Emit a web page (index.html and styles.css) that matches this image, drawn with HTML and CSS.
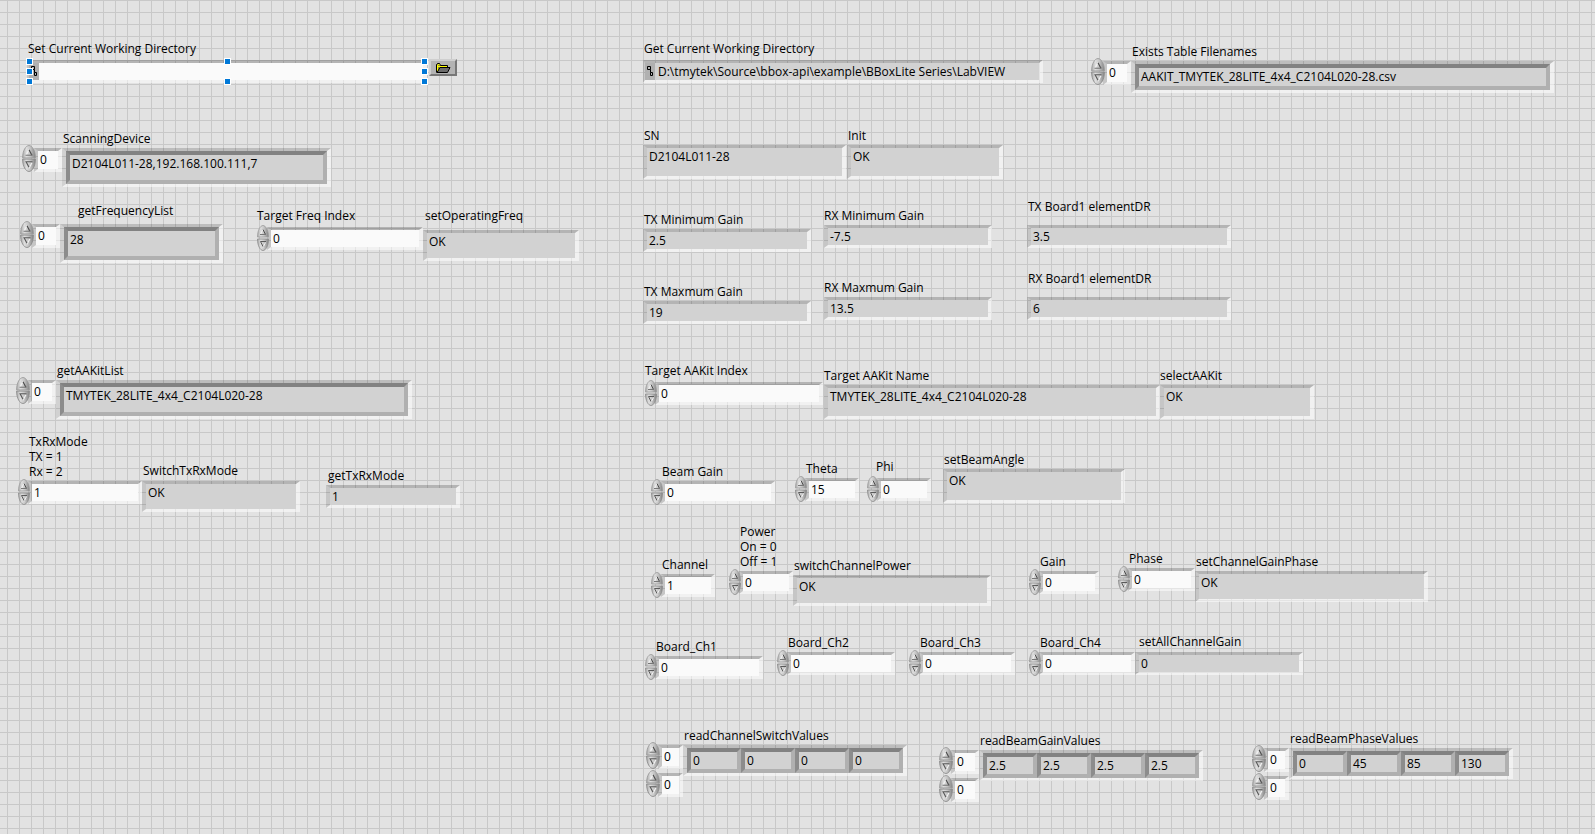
FILE: index.html
```html
<!DOCTYPE html>
<html lang="en">
<head>
<meta charset="utf-8">
<meta name="viewport" content="width=device-width, initial-scale=1">
<title>BBoxLite front panel</title>
<link rel="stylesheet" href="styles.css">
</head>
<body>
<svg class="defs" aria-hidden="true">
  <defs>
    <linearGradient id="metal" x1="0" x2="1" y1="0" y2="0">
      <stop offset="0" stop-color="#a8a8a8"/>
      <stop offset="0.3" stop-color="#dedede"/>
      <stop offset="0.6" stop-color="#c4c4c4"/>
      <stop offset="1" stop-color="#848484"/>
    </linearGradient>
    <symbol id="up" viewBox="0 0 12 13" preserveAspectRatio="none">
      <path d="M0.500 12C0.500 5 3.400 0.500 6 0.500S11.500 5 11.500 12Z" fill="url(#metal)" stroke="#9c9c9c" stroke-width="0.8"/>
      <path d="M3.500 9.500 6 4" fill="none" stroke="#f2f2f2"/>
      <path d="M6 4.500 8.500 9.500" fill="none" stroke="#4c4c4c"/>
      <path d="M3 9.500H9" fill="none" stroke="#777"/>
    </symbol>
    <symbol id="down" viewBox="0 0 12 13" preserveAspectRatio="none">
      <path d="M0.500 1C0.500 8 3.400 12.500 6 12.500S11.500 8 11.500 1Z" fill="url(#metal)" stroke="#8c8c8c" stroke-width="0.8"/>
      <path d="M8.500 4.500 6 9.500" fill="none" stroke="#f2f2f2"/>
      <path d="M9 3.500H3.500L6 8.500" fill="none" stroke="#5a5a5a"/>
    </symbol>
    <symbol id="path" viewBox="0 0 8 12">
      <path d="M1.500 1.500h3v3h-3zM4.500 7.500h2v3h-2zM4.500 4.500v3" fill="none" stroke="#000"/>
    </symbol>
  </defs>
</svg>
<main class="panel">

  <section class="node cwd-set">
    <label class="caption" for="cwd">Set Current Working Directory</label>
    <div class="row">
      <div class="field path control">
        <span class="path-mark"><svg width="8" height="12"><use href="#path"/></svg></span>
        <input class="text" id="cwd" type="text">
      </div>
      <button class="browse" type="button" aria-label="Browse">
        <svg width="16" height="12" viewBox="0 0 16 12"><path d="M1.500 10.500V2.500L2.500 1.500H4.500L5.500 3.500H12.500V5.500" fill="#8a8a3c" stroke="#000"/><path d="M2.500 9V3M3 2.500H4.500M3 4.500H12" stroke="#ff0" fill="none"/><path d="M2 10.500 5 5.500H15L12.500 10.500Z" fill="#6c6c6c" stroke="#000"/></svg>
      </button>
      <div class="selection"><i></i><i></i><i></i><i></i><i></i><i></i><i></i><i></i></div>
    </div>
  </section>

  <section class="node cwd-get">
    <label class="caption" for="cwd-now">Get Current Working Directory</label>
    <div class="field path">
      <span class="path-mark"><svg width="8" height="12"><use href="#path"/></svg></span>
      <output class="text" id="cwd-now">D:\tmytek\Source\bbox-api\example\BBoxLite Series\LabVIEW</output>
    </div>
  </section>

  <section class="node array-node tables">
    <label class="caption" for="tables">Exists Table Filenames</label>
    <div class="row">
      <div class="indices"><div class="index"><span class="spin"><button type="button" aria-label="Next"><svg><use href="#up"/></svg></button><button type="button" aria-label="Previous"><svg><use href="#down"/></svg></button></span><input class="field control" type="text" value="0" aria-label="Table index"></div></div>
      <div class="array"><output class="cell" id="tables">AAKIT_TMYTEK_28LITE_4x4_C2104L020-28.csv</output></div>
    </div>
  </section>

  <section class="node array-node scanning">
    <label class="caption" for="scanning">ScanningDevice</label>
    <div class="row">
      <div class="indices"><div class="index"><span class="spin"><button type="button" aria-label="Next"><svg><use href="#up"/></svg></button><button type="button" aria-label="Previous"><svg><use href="#down"/></svg></button></span><input class="field control" type="text" value="0" aria-label="Device index"></div></div>
      <div class="array"><output class="cell" id="scanning">D2104L011-28,192.168.100.111,7</output></div>
    </div>
  </section>

  <section class="node array-node freq-list">
    <label class="caption" for="freq-list">getFrequencyList</label>
    <div class="row">
      <div class="indices"><div class="index"><span class="spin"><button type="button" aria-label="Next"><svg><use href="#up"/></svg></button><button type="button" aria-label="Previous"><svg><use href="#down"/></svg></button></span><input class="field control" type="text" value="0" aria-label="Frequency list index"></div></div>
      <div class="array"><output class="cell" id="freq-list">28</output></div>
    </div>
  </section>

  <section class="node freq-index">
    <label class="caption" for="freq-index">Target Freq Index</label>
    <div class="row"><span class="spin"><button type="button" aria-label="Increase"><svg><use href="#up"/></svg></button><button type="button" aria-label="Decrease"><svg><use href="#down"/></svg></button></span><input class="field control" id="freq-index" type="text" value="0"></div>
  </section>

  <section class="node set-freq">
    <label class="caption" for="set-freq">setOperatingFreq</label>
    <output class="field" id="set-freq">OK</output>
  </section>

  <section class="node array-node kit-list">
    <label class="caption" for="kit-list">getAAKitList</label>
    <div class="row">
      <div class="indices"><div class="index"><span class="spin"><button type="button" aria-label="Next"><svg><use href="#up"/></svg></button><button type="button" aria-label="Previous"><svg><use href="#down"/></svg></button></span><input class="field control" type="text" value="0" aria-label="Kit list index"></div></div>
      <div class="array"><output class="cell" id="kit-list">TMYTEK_28LITE_4x4_C2104L020-28</output></div>
    </div>
  </section>

  <section class="node mode">
    <label class="caption" for="mode">TxRxMode<br>TX = 1<br>Rx = 2</label>
    <div class="row"><span class="spin"><button type="button" aria-label="Increase"><svg><use href="#up"/></svg></button><button type="button" aria-label="Decrease"><svg><use href="#down"/></svg></button></span><input class="field control" id="mode" type="text" value="1"></div>
  </section>

  <section class="node mode-switch">
    <label class="caption" for="mode-switch">SwitchTxRxMode</label>
    <output class="field" id="mode-switch">OK</output>
  </section>

  <section class="node mode-get">
    <label class="caption" for="mode-get">getTxRxMode</label>
    <output class="field" id="mode-get">1</output>
  </section>

  <section class="node sn">
    <label class="caption" for="sn">SN</label>
    <output class="field" id="sn">D2104L011-28</output>
  </section>

  <section class="node init">
    <label class="caption" for="init">Init</label>
    <output class="field" id="init">OK</output>
  </section>

  <section class="node tx-min">
    <label class="caption" for="tx-min">TX Minimum Gain</label>
    <output class="field" id="tx-min">2.5</output>
  </section>
  <section class="node rx-min">
    <label class="caption" for="rx-min">RX Minimum Gain</label>
    <output class="field" id="rx-min">-7.5</output>
  </section>
  <section class="node tx-dr">
    <label class="caption" for="tx-dr">TX Board1 elementDR</label>
    <output class="field" id="tx-dr">3.5</output>
  </section>
  <section class="node tx-max">
    <label class="caption" for="tx-max">TX Maxmum Gain</label>
    <output class="field" id="tx-max">19</output>
  </section>
  <section class="node rx-max">
    <label class="caption" for="rx-max">RX Maxmum Gain</label>
    <output class="field" id="rx-max">13.5</output>
  </section>
  <section class="node rx-dr">
    <label class="caption" for="rx-dr">RX Board1 elementDR</label>
    <output class="field" id="rx-dr">6</output>
  </section>

  <section class="node kit-index">
    <label class="caption" for="kit-index">Target AAKit Index</label>
    <div class="row"><span class="spin"><button type="button" aria-label="Increase"><svg><use href="#up"/></svg></button><button type="button" aria-label="Decrease"><svg><use href="#down"/></svg></button></span><input class="field control" id="kit-index" type="text" value="0"></div>
  </section>
  <section class="node kit-name">
    <label class="caption" for="kit-name">Target AAKit Name</label>
    <output class="field" id="kit-name">TMYTEK_28LITE_4x4_C2104L020-28</output>
  </section>
  <section class="node kit-select">
    <label class="caption" for="kit-select">selectAAKit</label>
    <output class="field" id="kit-select">OK</output>
  </section>

  <section class="node beam-gain">
    <label class="caption" for="beam-gain">Beam Gain</label>
    <div class="row"><span class="spin"><button type="button" aria-label="Increase"><svg><use href="#up"/></svg></button><button type="button" aria-label="Decrease"><svg><use href="#down"/></svg></button></span><input class="field control" id="beam-gain" type="text" value="0"></div>
  </section>
  <section class="node theta">
    <label class="caption" for="theta">Theta</label>
    <div class="row"><span class="spin"><button type="button" aria-label="Increase"><svg><use href="#up"/></svg></button><button type="button" aria-label="Decrease"><svg><use href="#down"/></svg></button></span><input class="field control" id="theta" type="text" value="15"></div>
  </section>
  <section class="node phi">
    <label class="caption" for="phi">Phi</label>
    <div class="row"><span class="spin"><button type="button" aria-label="Increase"><svg><use href="#up"/></svg></button><button type="button" aria-label="Decrease"><svg><use href="#down"/></svg></button></span><input class="field control" id="phi" type="text" value="0"></div>
  </section>
  <section class="node beam-angle">
    <label class="caption" for="beam-angle">setBeamAngle</label>
    <output class="field" id="beam-angle">OK</output>
  </section>

  <section class="node channel">
    <label class="caption" for="channel">Channel</label>
    <div class="row"><span class="spin"><button type="button" aria-label="Increase"><svg><use href="#up"/></svg></button><button type="button" aria-label="Decrease"><svg><use href="#down"/></svg></button></span><input class="field control" id="channel" type="text" value="1"></div>
  </section>
  <section class="node power">
    <label class="caption" for="power">Power<br>On = 0<br>Off = 1</label>
    <div class="row"><span class="spin"><button type="button" aria-label="Increase"><svg><use href="#up"/></svg></button><button type="button" aria-label="Decrease"><svg><use href="#down"/></svg></button></span><input class="field control" id="power" type="text" value="0"></div>
  </section>
  <section class="node power-switch">
    <label class="caption" for="power-switch">switchChannelPower</label>
    <output class="field" id="power-switch">OK</output>
  </section>
  <section class="node gain">
    <label class="caption" for="gain">Gain</label>
    <div class="row"><span class="spin"><button type="button" aria-label="Increase"><svg><use href="#up"/></svg></button><button type="button" aria-label="Decrease"><svg><use href="#down"/></svg></button></span><input class="field control" id="gain" type="text" value="0"></div>
  </section>
  <section class="node phase">
    <label class="caption" for="phase">Phase</label>
    <div class="row"><span class="spin"><button type="button" aria-label="Increase"><svg><use href="#up"/></svg></button><button type="button" aria-label="Decrease"><svg><use href="#down"/></svg></button></span><input class="field control" id="phase" type="text" value="0"></div>
  </section>
  <section class="node gain-phase">
    <label class="caption" for="gain-phase">setChannelGainPhase</label>
    <output class="field" id="gain-phase">OK</output>
  </section>

  <section class="node board1">
    <label class="caption" for="board1">Board_Ch1</label>
    <div class="row"><span class="spin"><button type="button" aria-label="Increase"><svg><use href="#up"/></svg></button><button type="button" aria-label="Decrease"><svg><use href="#down"/></svg></button></span><input class="field control" id="board1" type="text" value="0"></div>
  </section>
  <section class="node board2">
    <label class="caption" for="board2">Board_Ch2</label>
    <div class="row"><span class="spin"><button type="button" aria-label="Increase"><svg><use href="#up"/></svg></button><button type="button" aria-label="Decrease"><svg><use href="#down"/></svg></button></span><input class="field control" id="board2" type="text" value="0"></div>
  </section>
  <section class="node board3">
    <label class="caption" for="board3">Board_Ch3</label>
    <div class="row"><span class="spin"><button type="button" aria-label="Increase"><svg><use href="#up"/></svg></button><button type="button" aria-label="Decrease"><svg><use href="#down"/></svg></button></span><input class="field control" id="board3" type="text" value="0"></div>
  </section>
  <section class="node board4">
    <label class="caption" for="board4">Board_Ch4</label>
    <div class="row"><span class="spin"><button type="button" aria-label="Increase"><svg><use href="#up"/></svg></button><button type="button" aria-label="Decrease"><svg><use href="#down"/></svg></button></span><input class="field control" id="board4" type="text" value="0"></div>
  </section>
  <section class="node all-gain">
    <label class="caption" for="all-gain">setAllChannelGain</label>
    <output class="field" id="all-gain">0</output>
  </section>

  <section class="node array-node grid-node narrow read-switch">
    <label class="caption" for="read-switch">readChannelSwitchValues</label>
    <div class="row">
      <div class="indices">
        <div class="index"><span class="spin"><button type="button" aria-label="Next row"><svg><use href="#up"/></svg></button><button type="button" aria-label="Previous row"><svg><use href="#down"/></svg></button></span><input class="field control" type="text" value="0" aria-label="Switch row"></div>
        <div class="index"><span class="spin"><button type="button" aria-label="Next column"><svg><use href="#up"/></svg></button><button type="button" aria-label="Previous column"><svg><use href="#down"/></svg></button></span><input class="field control" type="text" value="0" aria-label="Switch column"></div>
      </div>
      <div class="array"><output class="cell" id="read-switch">0</output><output class="cell">0</output><output class="cell">0</output><output class="cell">0</output></div>
    </div>
  </section>

  <section class="node array-node grid-node read-gain">
    <label class="caption" for="read-gain">readBeamGainValues</label>
    <div class="row">
      <div class="indices">
        <div class="index"><span class="spin"><button type="button" aria-label="Next row"><svg><use href="#up"/></svg></button><button type="button" aria-label="Previous row"><svg><use href="#down"/></svg></button></span><input class="field control" type="text" value="0" aria-label="Gain row"></div>
        <div class="index"><span class="spin"><button type="button" aria-label="Next column"><svg><use href="#up"/></svg></button><button type="button" aria-label="Previous column"><svg><use href="#down"/></svg></button></span><input class="field control" type="text" value="0" aria-label="Gain column"></div>
      </div>
      <div class="array"><output class="cell" id="read-gain">2.5</output><output class="cell">2.5</output><output class="cell">2.5</output><output class="cell">2.5</output></div>
    </div>
  </section>

  <section class="node array-node grid-node narrow read-phase">
    <label class="caption" for="read-phase">readBeamPhaseValues</label>
    <div class="row">
      <div class="indices">
        <div class="index"><span class="spin"><button type="button" aria-label="Next row"><svg><use href="#up"/></svg></button><button type="button" aria-label="Previous row"><svg><use href="#down"/></svg></button></span><input class="field control" type="text" value="0" aria-label="Phase row"></div>
        <div class="index"><span class="spin"><button type="button" aria-label="Next column"><svg><use href="#up"/></svg></button><button type="button" aria-label="Previous column"><svg><use href="#down"/></svg></button></span><input class="field control" type="text" value="0" aria-label="Phase column"></div>
      </div>
      <div class="array"><output class="cell" id="read-phase">0</output><output class="cell">45</output><output class="cell">85</output><output class="cell">130</output></div>
    </div>
  </section>

</main>
</body>
</html>
```
FILE: styles.css
```css
* {
  box-sizing: border-box;
}

body {
  margin: 0;
  font: 12px/15px "Open Sans", "Noto Sans", sans-serif;
  color: #000;
}

.defs {
  position: absolute;
  width: 0;
  height: 0;
}

/* Alignment grid of the front panel */
.panel {
  position: relative;
  min-height: 100vh;
  background-color: #e2e2e2;
  background-image:
    linear-gradient(to right, #c8c8c8 1px, transparent 1px),
    linear-gradient(to bottom, #c8c8c8 1px, transparent 1px);
  background-size: 12px 12px;
  background-position: 7px 0;
}

/* Every control is placed freely on the panel */
.node {
  --indent: 1px;
  --gap: 2px;
  --w: 168px;
  --h: 23px;
  position: absolute;
}

.caption {
  display: block;
  margin: 0 0 var(--gap) var(--indent);
  white-space: nowrap;
}

.row {
  display: flex;
  align-items: flex-start;
  position: relative;
}

.field {
  display: block;
  width: var(--w);
  height: var(--h);
  margin: 0;
  padding: 1px 2px;
  border-style: solid;
  border-width: 3px 4px;
  border-color: rgba(0, 0, 0, 0.2) rgba(255, 255, 255, 0.52) rgba(255, 255, 255, 0.52) rgba(0, 0, 0, 0.12);
  border-radius: 0;
  background: #d2d2d2 padding-box;
  font: inherit;
  color: #000;
  white-space: nowrap;
  outline: 0;
}

.control {
  background-color: #fafafa;
}

input.field {
  padding: 0 2px;
}

/* Increment and decrement pair */
.spin {
  display: flex;
  flex-direction: column;
  flex: none;
  width: 12px;
  margin: -2px -2px 0 1px;
  position: relative;
  z-index: 1;
}

.spin button {
  width: 100%;
  height: 13px;
  padding: 0;
  border: 0;
  background: none;
}

.spin svg {
  display: block;
  width: 100%;
  height: 100%;
}

/* Path fields */
.path {
  display: flex;
  padding: 0;
  border-left-width: 2px;
}

.path-mark {
  flex: none;
  width: 10px;
  padding: 2px 1px;
  background: #b0b0b0;
}

.path-mark svg {
  display: block;
}

.path .text {
  flex: 1;
  min-width: 0;
  padding: 1px 3px;
  border: 0;
  background: none;
  font: inherit;
  outline: 0;
}

.browse {
  display: grid;
  place-items: center;
  width: 28px;
  height: 17px;
  margin: -1px 0 0 2px;
  padding: 0;
  border: 2px solid;
  border-color: #cfcfcf #777 #777 #cfcfcf;
  background: #b3b3b3;
}

.selection {
  position: absolute;
  top: -2px;
  left: -1px;
  display: grid;
  grid-template-columns: repeat(3, 7px);
  grid-auto-rows: 7px;
  justify-content: space-between;
  row-gap: 3px;
  width: 402px;
}

.selection i {
  border: 1px solid #fff;
  background: #0078d7;
}

.selection i:nth-child(5) {
  grid-column: 3;
}

/* Array frames */
.array-node {
  --h: 39px;
  --index: 28px;
}

.array-node .spin {
  width: 14px;
  margin-top: -3px;
}

.array-node .spin button {
  height: 14px;
}

.array-node .spin button + button {
  margin-top: -1px;
}

.indices {
  display: flex;
  flex-direction: column;
  gap: 4px;
}

.index {
  display: flex;
  height: 24px;
}

.index .field {
  width: var(--index);
  height: 24px;
  padding-bottom: 2px;
}

.array {
  display: flex;
  width: var(--w);
  height: var(--h);
  border-style: solid;
  border-width: 3px 4px;
  border-color: rgba(0, 0, 0, 0.16) rgba(255, 255, 255, 0.52) rgba(255, 255, 255, 0.52) rgba(0, 0, 0, 0.08);
}

.cell {
  flex: 1;
  padding: 1px 2px;
  border: 4px solid;
  border-color: #828282 #b0b0b0 #b0b0b0 #8c8c8c;
  background: #d2d2d2;
  white-space: nowrap;
}

.grid-node {
  --w: 224px;
  --h: 31px;
}

.narrow {
  --index: 25px;
}

/* Placement on the panel */
.cwd-set { left: 27px; top: 41px; --gap: 4px; --w: 400px; }
.cwd-get { left: 643px; top: 41px; --gap: 4px; --w: 400px; }
.tables { left: 1090px; top: 44px; --indent: 42px; --w: 423px; --h: 32px; }
.scanning { left: 21px; top: 131px; --indent: 42px; --w: 269px; }
.freq-list { left: 19px; top: 203px; --indent: 59px; --gap: 6px; --w: 163px; }
.freq-index { left: 256px; top: 208px; --gap: 4px; --w: 156px; }
.set-freq { left: 423px; top: 208px; --indent: 2px; --gap: 7px; --w: 156px; --h: 31px; }
.kit-list { left: 15px; top: 363px; --indent: 42px; --w: 356px; }
.mode { left: 17px; top: 434px; --indent: 12px; --w: 114px; }
.mode-switch { left: 142px; top: 463px; --gap: 3px; --w: 158px; --h: 31px; }
.mode-get { left: 326px; top: 468px; --indent: 2px; --w: 134px; }
.sn { left: 643px; top: 128px; --w: 203px; --h: 34px; }
.init { left: 847px; top: 128px; --w: 156px; --h: 34px; }
.tx-min { left: 643px; top: 212px; }
.rx-min { left: 824px; top: 208px; --indent: 0px; }
.tx-dr { left: 1027px; top: 199px; --gap: 11px; --w: 204px; }
.tx-max { left: 643px; top: 284px; }
.rx-max { left: 824px; top: 280px; --indent: 0px; }
.rx-dr { left: 1027px; top: 271px; --gap: 11px; --w: 204px; }
.kit-index { left: 644px; top: 363px; --gap: 4px; }
.kit-name { left: 824px; top: 368px; --indent: 0px; --w: 336px; --h: 34px; }
.kit-select { left: 1160px; top: 368px; --indent: 0px; --w: 154px; --h: 34px; }
.beam-gain { left: 650px; top: 464px; --indent: 12px; --w: 114px; }
.theta { left: 794px; top: 461px; --indent: 12px; --w: 54px; }
.phi { left: 866px; top: 459px; --indent: 10px; --gap: 4px; --w: 54px; }
.beam-angle { left: 943px; top: 452px; --w: 182px; --h: 34px; }
.channel { left: 650px; top: 557px; --indent: 12px; --w: 54px; }
.power { left: 728px; top: 524px; --indent: 12px; --w: 54px; }
.power-switch { left: 793px; top: 558px; --w: 198px; --h: 31px; }
.gain { left: 1028px; top: 554px; --indent: 12px; --w: 60px; }
.phase { left: 1117px; top: 551px; --indent: 12px; --w: 67px; }
.gain-phase { left: 1195px; top: 554px; --w: 233px; --h: 31px; }
.board1 { left: 644px; top: 639px; --indent: 12px; --w: 108px; }
.board2 { left: 776px; top: 635px; --indent: 12px; --w: 108px; }
.board3 { left: 908px; top: 635px; --indent: 12px; --w: 96px; }
.board4 { left: 1028px; top: 635px; --indent: 12px; --w: 96px; }
.all-gain { left: 1135px; top: 634px; --indent: 4px; --gap: 3px; }
.read-switch { left: 645px; top: 728px; --indent: 39px; }
.read-gain { left: 938px; top: 733px; --indent: 42px; }
.read-phase { left: 1251px; top: 731px; --indent: 39px; }
```
